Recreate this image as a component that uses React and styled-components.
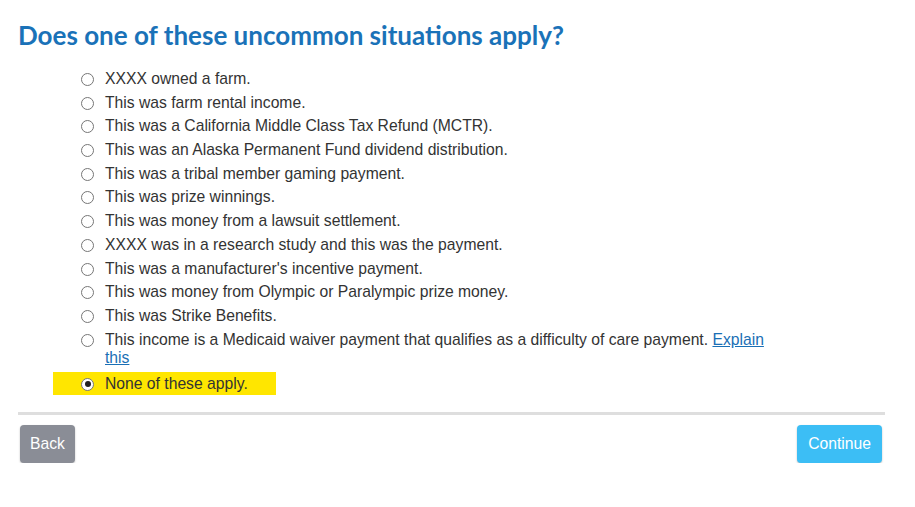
import React, { useState } from 'react'
import styled, { createGlobalStyle } from 'styled-components'

const GlobalStyle = createGlobalStyle`
    body {
        margin: 0;
        background: #fff;
        font-family: "Liberation Sans", Arial, sans-serif;
    }
`;

const Page = styled.div`
    padding: 0 30px 0 18px;
`;

const Title = styled.h1`
    margin: 0;
    padding-top: 20px;
    font-family: Lato, "Open Sans", sans-serif;
    font-weight: 700;
    font-size: 26px;
    line-height: 30px;
    color: #1a72b8;
`;

const Options = styled.div`
    display: flex;
    flex-direction: column;
    align-items: flex-start;
    gap: 5.7px;
    margin-top: 20px;
    padding-left: 35px;
`;

const Option = styled.label`
    box-sizing: border-box;
    display: flex;
    align-items: flex-start;
    gap: 11px;
    max-width: 750px;
    padding: ${p => (p.$selected ? '2.5px 28px' : '0 28px')};
    background: ${p => (p.$selected ? '#ffe600' : 'transparent')};
    font-size: 15.7px;
    line-height: 18px;
    color: #333;
    cursor: pointer;
`;

const Radio = styled.span`
    flex: none;
    width: 11px;
    height: 11px;
    margin-top: 3px;
    border: 1px solid #767676;
    border-radius: 50%;
    background: #fff;
    display: flex;
    align-items: center;
    justify-content: center;

    &::after {
        content: '';
        width: 6px;
        height: 6px;
        border-radius: 50%;
        background: ${p => (p.$checked ? '#222' : 'transparent')};
    }
`;

const Link = styled.a`
    color: #1a6fb5;
    text-decoration: underline;
`;

const Divider = styled.hr`
    margin: 17px 0 0;
    border: none;
    height: 3px;
    background: #dedede;
`;

const Footer = styled.div`
    display: flex;
    justify-content: space-between;
    padding: 10px 3px 0 2px;
`;

const Button = styled.button`
    height: 38px;
    padding: 0 ${p => (p.$primary ? '11px' : '10px')};
    border: none;
    border-radius: 4px;
    background: ${p => (p.$primary ? '#3cbef5' : '#8a8d96')};
    color: #fff;
    font-family: "Liberation Sans", Arial, sans-serif;
    font-size: 15.7px;
    box-shadow: 0 1px 2px rgba(0, 0, 0, 0.25);
    cursor: pointer;
`;

const choices = [
    'XXXX owned a farm.',
    'This was farm rental income.',
    'This was a California Middle Class Tax Refund (MCTR).',
    'This was an Alaska Permanent Fund dividend distribution.',
    'This was a tribal member gaming payment.',
    'This was prize winnings.',
    'This was money from a lawsuit settlement.',
    'XXXX was in a research study and this was the payment.',
    "This was a manufacturer's incentive payment.",
    'This was money from Olympic or Paralympic prize money.',
    'This was Strike Benefits.',
];

function App() {
    const [picked, setPicked] = useState('none')

    return (
        <>
        <GlobalStyle />
        <Page>
            <Title>Does one of these uncommon situations apply?</Title>
            <Options>
                {choices.map((c, i) => (
                    <Option key={i} onClick={() => setPicked(i)} $selected={picked === i}>
                        <Radio $checked={picked === i} />
                        <span>{c}</span>
                    </Option>
                ))}
                <Option onClick={() => setPicked('medicaid')} $selected={picked === 'medicaid'}>
                    <Radio $checked={picked === 'medicaid'} />
                    <span>
                        This income is a Medicaid waiver payment that qualifies as a difficulty of care payment.{' '}
                        <Link href="#">Explain this</Link>
                    </span>
                </Option>
                <Option onClick={() => setPicked('none')} $selected={picked === 'none'}>
                    <Radio $checked={picked === 'none'} />
                    <span>None of these apply.</span>
                </Option>
            </Options>
            <Divider />
            <Footer>
                <Button>Back</Button>
                <Button $primary>Continue</Button>
            </Footer>
        </Page>
        </>
    )
}

export default App
